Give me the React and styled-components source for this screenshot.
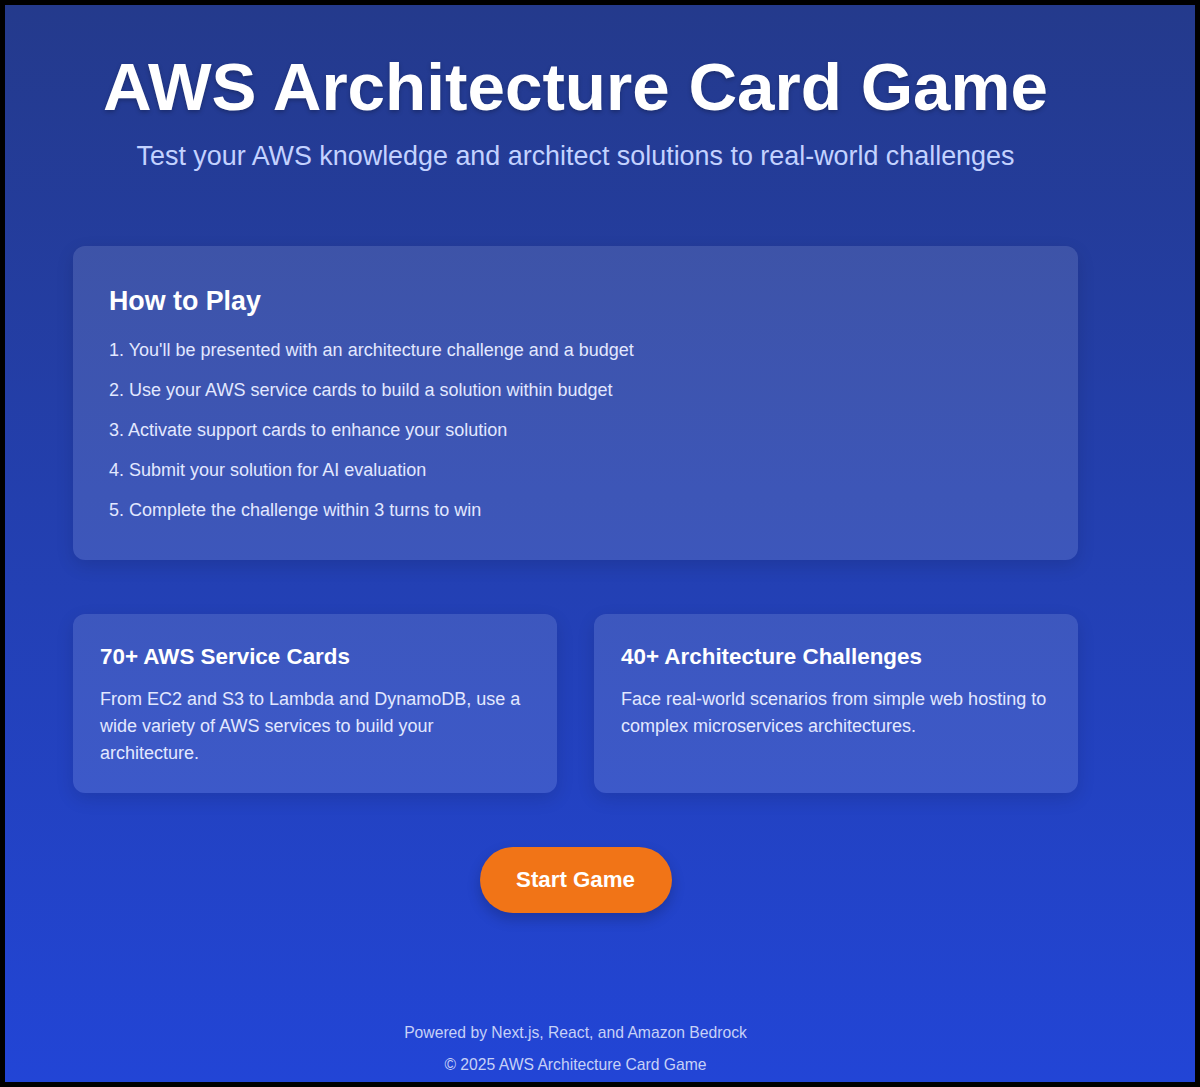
import styled, { createGlobalStyle } from "styled-components";

const GlobalStyle = createGlobalStyle`
  html, body {
    margin: 0;
    padding: 0;
    background: #000;
  }
  * {
    box-sizing: border-box;
  }
`;

const Frame = styled.div`
  border: 5px solid #000;
  height: 1087px;
`;

const Page = styled.main`
  height: 100%;
  background: linear-gradient(to bottom, #243a8c 0%, #2245d6 100%);
  font-family: "Liberation Sans", Arial, sans-serif;
  color: #fff;
  display: flex;
  flex-direction: column;
  align-items: center;
  padding: 42px 49px 0 0;
`;

const Header = styled.header`
  text-align: center;
  margin-bottom: 74px;
`;

const Title = styled.h1`
  font-size: 67.4px;
  font-weight: 700;
  margin: 0;
  line-height: 80px;
  text-shadow: 0 2px 4px rgba(0, 0, 0, 0.25);
`;

const Subtitle = styled.p`
  font-size: 26.9px;
  line-height: 32px;
  margin: 13px 0 0;
  color: #c3d2ff;
`;

const Content = styled.section`
  width: 1005px;
  display: flex;
  flex-direction: column;
  gap: 54px;
`;

const Panel = styled.div`
  background: rgba(255, 255, 255, 0.12);
  border-radius: 12px;
  box-shadow: 0 6px 18px rgba(0, 0, 0, 0.12);
  padding: ${(p) => p.$pad || "39px 36px 39px"};
`;

const PanelTitle = styled.h2`
  font-size: 26.8px;
  line-height: 32px;
  font-weight: 700;
  margin: 0 0 23px;
`;

const Steps = styled.ol`
  list-style: none;
  margin: 0;
  padding: 0;
  display: flex;
  flex-direction: column;
  gap: 19px;
  counter-reset: step;
`;

const Step = styled.li`
  font-size: 18px;
  line-height: 21px;
  color: #e2e8ff;
  counter-increment: step;

  &::before {
    content: counter(step) ". ";
  }
`;

const Features = styled.div`
  display: grid;
  grid-template-columns: 1fr 1fr;
  gap: 37px;
`;

const FeatureTitle = styled.h3`
  font-size: 22.4px;
  line-height: 27px;
  font-weight: 700;
  margin: 0 0 16px;
`;

const FeatureText = styled.p`
  font-size: 18px;
  line-height: 27px;
  margin: 0;
  color: #e2e8ff;
`;

const StartButton = styled.button`
  margin-top: 54px;
  width: 192px;
  height: 66px;
  border: none;
  border-radius: 33px;
  background: #f17417;
  color: #fff;
  font-family: "Liberation Sans", Arial, sans-serif;
  font-size: 22.3px;
  font-weight: 700;
  box-shadow: 0 6px 14px rgba(0, 0, 0, 0.2);
  cursor: pointer;
`;

const Footer = styled.footer`
  margin-top: auto;
  text-align: center;
  color: #c7d1f7;
  font-size: 15.7px;
  line-height: 18px;

  p {
    margin: 0 0 14px;
  }

  p:last-child {
    margin-bottom: 8px;
  }
`;

const steps = [
  "You'll be presented with an architecture challenge and a budget",
  "Use your AWS service cards to build a solution within budget",
  "Activate support cards to enhance your solution",
  "Submit your solution for AI evaluation",
  "Complete the challenge within 3 turns to win",
];

export default function App() {
  return (
    <Frame>
      <GlobalStyle />
      <Page>
        <Header>
          <Title>AWS Architecture Card Game</Title>
          <Subtitle>
            Test your AWS knowledge and architect solutions to real-world challenges
          </Subtitle>
        </Header>
        <Content>
          <Panel>
            <PanelTitle>How to Play</PanelTitle>
            <Steps>
              {steps.map((s) => (
                <Step key={s}>{s}</Step>
              ))}
            </Steps>
          </Panel>
          <Features>
            <Panel $pad="29px 27px 26px">
              <FeatureTitle>70+ AWS Service Cards</FeatureTitle>
              <FeatureText>
                From EC2 and S3 to Lambda and DynamoDB, use a wide variety of AWS
                services to build your architecture.
              </FeatureText>
            </Panel>
            <Panel $pad="29px 27px 26px">
              <FeatureTitle>40+ Architecture Challenges</FeatureTitle>
              <FeatureText>
                Face real-world scenarios from simple web hosting to complex
                microservices architectures.
              </FeatureText>
            </Panel>
          </Features>
        </Content>
        <StartButton>Start Game</StartButton>
        <Footer>
          <p>Powered by Next.js, React, and Amazon Bedrock</p>
          <p>© 2025 AWS Architecture Card Game</p>
        </Footer>
      </Page>
    </Frame>
  );
}
